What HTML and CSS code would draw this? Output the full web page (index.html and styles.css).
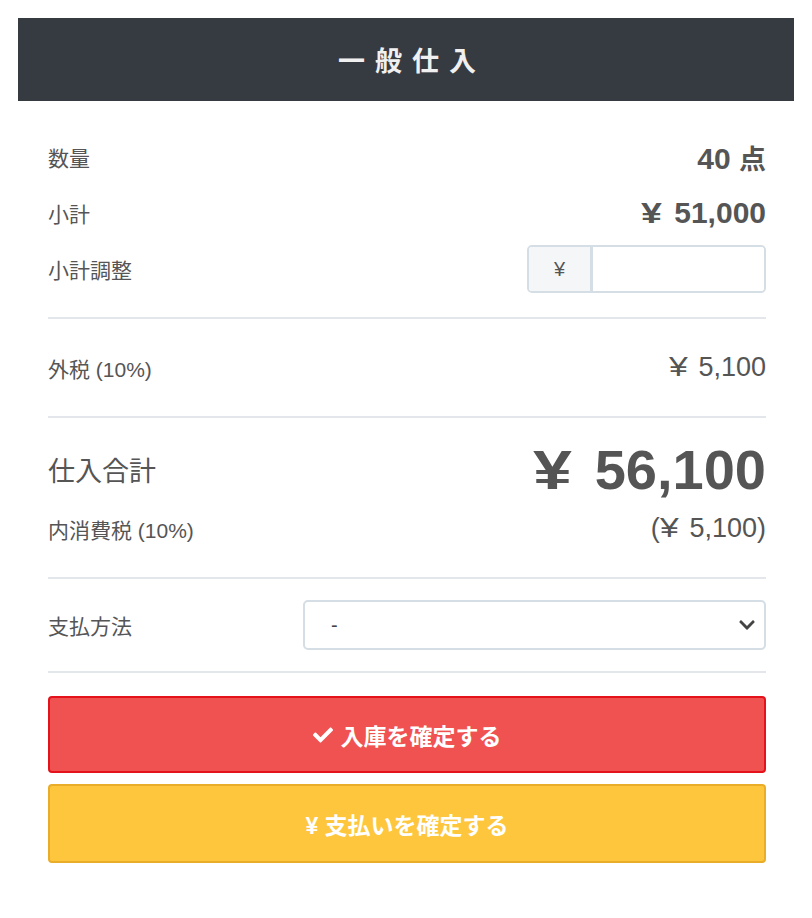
FILE: index.html
```html
<!DOCTYPE html>
<html lang="ja">
<head>
    <meta charset="UTF-8">
    <meta name="viewport" content="width=device-width, initial-scale=1.0">
    <title>一般仕入</title>
    <link rel="stylesheet" href="styles.css">
</head>
<body>
    <div class="card">
        <div class="card-header">一般仕入</div>
        <div class="card-body">
            <div class="section">
                <div class="row">
                    <span class="label">数量</span>
                    <span class="value strong">40 <span class="unit">点</span></span>
                </div>
                <div class="row">
                    <span class="label">小計</span>
                    <span class="value strong"><span class="yen">¥</span> 51,000</span>
                </div>
                <div class="row">
                    <span class="label">小計調整</span>
                    <div class="input-group">
                        <span class="addon">¥</span>
                        <input type="text" class="adjust">
                    </div>
                </div>
            </div>
            <hr>
            <div class="section">
                <div class="row tax">
                    <span class="label">外税 (10%)</span>
                    <span class="value"><span class="yen">¥</span> 5,100</span>
                </div>
            </div>
            <hr>
            <div class="section totals">
                <div class="row">
                    <span class="label big">仕入合計</span>
                    <span class="value huge"><span class="yen">¥</span> 56,100</span>
                </div>
                <div class="row">
                    <span class="label">内消費税 (10%)</span>
                    <span class="value">(<span class="yen">¥</span> 5,100)</span>
                </div>
            </div>
            <hr class="sm">
            <div class="row pay-row">
                <span class="label">支払方法</span>
                <div class="select-wrap">
                    <select class="pay">
                        <option>-</option>
                    </select>
                    <svg class="chevron" viewBox="0 0 448 512" width="18" height="18"><path fill="#444" d="M207 381.5L12.7 187.1c-9.4-9.4-9.4-24.6 0-33.9l22.7-22.7c9.4-9.4 24.5-9.4 33.9 0L224 284.5l154.7-154c9.4-9.3 24.5-9.3 33.9 0l22.7 22.7c9.4 9.4 9.4 24.6 0 33.9L241 381.5c-9.4 9.4-24.6 9.4-34 0z"/></svg>
                </div>
            </div>
            <hr class="sm">
            <div class="actions">
                <button class="btn btn-danger">
                    <svg viewBox="0 0 512 512" width="20" height="20"><path fill="#fff" d="M173.9 439.4l-166.4-166.4c-10-10-10-26.2 0-36.2l36.2-36.2c10-10 26.2-10 36.2 0L192 312.7 432.1 72.6c10-10 26.2-10 36.2 0l36.2 36.2c10 10 10 26.2 0 36.2L210.1 439.4c-10 10-26.2 10-36.2 0z"/></svg>
                    入庫を確定する
                </button>
                <button class="btn btn-warning">¥ 支払いを確定する</button>
            </div>
        </div>
    </div>
</body>
</html>
```

FILE: styles.css
```css
body {
    margin: 18px;
    background: #fff;
    font-family: "Liberation Sans", "Noto Sans CJK JP", sans-serif;
    color: #555;
}
.card {
    width: 778px;
    background: #fff;
    box-shadow: 0 1px 3px rgba(0, 0, 0, 0.14);
}
.card-header {
    height: 83px;
    background: #363a41;
    color: #f0f0f0;
    font-size: 27px;
    font-weight: bold;
    letter-spacing: 10px;
    text-indent: 10px;
    display: flex;
    align-items: center;
    justify-content: center;
}
.card-body {
    padding: 32px 30px 30px;
}
.section {
    display: flex;
    flex-direction: column;
    gap: 8px;
}
.row {
    height: 48px;
    display: flex;
    align-items: center;
    justify-content: space-between;
}
.row.tax {
    height: 49px;
}
.section.totals {
    gap: 4px;
}
.section.totals .row {
    height: 55px;
}
.label {
    font-size: 21px;
}
.label.big {
    font-size: 27px;
}
.value {
    font-size: 27px;
}
.value.strong {
    font-size: 30px;
    font-weight: bold;
}
.unit {
    font-size: 27px;
}
.value.huge {
    font-size: 56px;
    font-weight: bold;
}
.yen {
    display: inline-block;
    margin-right: 0.27em;
    transform: scaleX(1.25);
    transform-origin: left center;
}
hr {
    border: none;
    height: 2px;
    background: #e3e7eb;
    margin: 24px 0;
}
hr.sm {
    margin: 21px 0;
}
hr.sm + .actions {
    margin-top: 23px;
}
.input-group {
    display: flex;
    width: 239px;
    height: 48px;
    box-sizing: border-box;
    border: 2px solid #d5dde5;
    border-radius: 5px;
    overflow: hidden;
}
.addon {
    flex: none;
    width: 61px;
    background: #f5f6f8;
    border-right: 3px solid #d5dde5;
    display: flex;
    align-items: center;
    justify-content: center;
    font-size: 20px;
    color: #555;
}
.adjust {
    flex: 1;
    min-width: 0;
    border: none;
    outline: none;
    padding: 0 10px;
    font-size: 18px;
}
.pay-row {
    height: 50px;
}
.select-wrap {
    position: relative;
    width: 463px;
}
.pay {
    display: block;
    width: 100%;
    height: 50px;
    appearance: none;
    border: 2px solid #d5dde5;
    border-radius: 5px;
    background: #fff;
    padding: 0 26px;
    font-size: 20px;
    font-family: inherit;
    color: #444;
}
.chevron {
    position: absolute;
    right: 10px;
    top: 16px;
    pointer-events: none;
}
.actions {
    display: flex;
    flex-direction: column;
    gap: 11px;
}
.btn {
    height: 77px;
    border-radius: 4px;
    color: #fff;
    font-family: inherit;
    font-size: 23px;
    font-weight: bold;
    display: flex;
    align-items: center;
    justify-content: center;
    gap: 8px;
    cursor: pointer;
}
.btn-danger {
    background: #f05252;
    border: 2px solid #e3121b;
}
.btn-warning {
    background: #fec63d;
    border: 2px solid #eaad2a;
    height: 79px;
}
```
